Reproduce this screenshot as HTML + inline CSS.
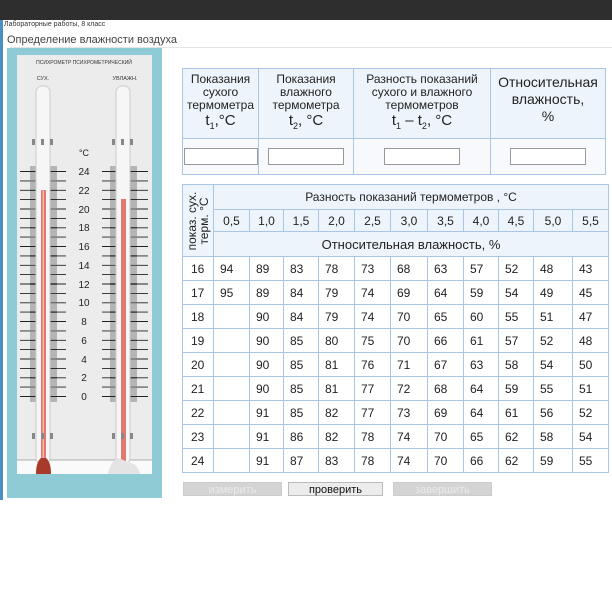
<!DOCTYPE html>
<html><head><meta charset="utf-8"><style>
*{margin:0;padding:0;box-sizing:border-box}
body{width:612px;height:614px;background:#fff;position:relative;overflow:hidden;font-family:"Liberation Sans",Arial,sans-serif;color:#222}
.abs{position:absolute}
table{border-collapse:collapse;table-layout:fixed}
td{border:1px solid #a9c6e6;text-align:center;font-size:12px;padding:0}
.t1 td{background:#eef4fb}
.t1 tr.in td{background:#f7f9fc}
.inp{display:inline-block;width:76px;height:17px;border:1px solid #999;background:#fff;vertical-align:middle}
.t2 td{font-size:12px}
.t2 .h td{background:#eef4fb}
.t2 .d td{background:#fff;text-align:left;padding-left:6px}
.t2 .d td.f{padding-left:8px;background:#fff}
.btn{position:absolute;top:482px;height:14px;font-size:11px;text-align:center;line-height:14px;border:1px solid #bbb}
</style></head><body>
<div class="abs" style="left:0;top:0;width:612px;height:20px;background:#2e2e2e"></div>
<div class="abs" style="left:0;top:20px;width:3px;height:480px;background:#4a90c0"></div>
<div class="abs" style="left:4px;top:21px;font-size:7px;color:#333">Лабораторные работы, 8 класс</div>
<div class="abs" style="left:7px;top:34px;font-size:11px;color:#444">Определение влажности воздуха</div>
<div class="abs" style="left:10px;top:47px;width:602px;height:1px;background:#e4e4e4"></div>

<svg class="abs" style="left:0;top:0" width="170" height="505">
<rect x="7" y="48" width="155" height="450" fill="#8ecbd4"/>
<rect x="17" y="55" width="135" height="419" fill="#ececec"/>
<rect x="17" y="460" width="135" height="14" fill="#fafafa"/>
<line x1="17" y1="460" x2="152" y2="460" stroke="#999" stroke-width="0.7"/>
<text x="84" y="64" font-size="5" text-anchor="middle" fill="#333" font-family="Liberation Sans">ПСИХРОМЕТР ПСИХРОМЕТРИЧЕСКИЙ</text>
<text x="43" y="80" font-size="5.5" text-anchor="middle" fill="#333" font-family="Liberation Sans">СУХ.</text>
<text x="125" y="80" font-size="5.5" text-anchor="middle" fill="#333" font-family="Liberation Sans">УВЛАЖН.</text>
<g>
<path id="lt" d="M30 167H57M30 169H57M30 171H57M30 173H57M30 175H57M30 177H57M30 179H57M30 181H57M30 183H57M30 185H57M30 187H57M30 189H57M30 191H57M30 193H57M30 195H57M30 197H57M30 199H57M30 201H57M30 203H57M30 205H57M30 207H57M30 209H57M30 211H57M30 213H57M30 215H57M30 217H57M30 219H57M30 221H57M30 223H57M30 225H57M30 227H57M30 229H57M30 231H57M30 233H57M30 235H57M30 237H57M30 239H57M30 241H57M30 243H57M30 245H57M30 247H57M30 249H57M30 251H57M30 253H57M30 255H57M30 257H57M30 259H57M30 261H57M30 263H57M30 265H57M30 267H57M30 269H57M30 271H57M30 273H57M30 275H57M30 277H57M30 279H57M30 281H57M30 283H57M30 285H57M30 287H57M30 289H57M30 291H57M30 293H57M30 295H57M30 297H57M30 299H57M30 301H57M30 303H57M30 305H57M30 307H57M30 309H57M30 311H57M30 313H57M30 315H57M30 317H57M30 319H57M30 321H57M30 323H57M30 325H57M30 327H57M30 329H57M30 331H57M30 333H57M30 335H57M30 337H57M30 339H57M30 341H57M30 343H57M30 345H57M30 347H57M30 349H57M30 351H57M30 353H57M30 355H57M30 357H57M30 359H57M30 361H57M30 363H57M30 365H57M30 367H57M30 369H57M30 371H57M30 373H57M30 375H57M30 377H57M30 379H57M30 381H57M30 383H57M30 385H57M30 387H57M30 389H57M30 391H57M30 393H57M30 395H57M30 397H57M30 399H57M30 401H57" stroke="#555" stroke-width="0.8"/>
<use href="#lt" x="80"/>
</g>
<g stroke="#222" stroke-width="0.9" id="lg">
<path d="M20 171.5H66M20 180.9H66M20 190.3H66M20 199.6H66M20 209H66M20 218.4H66M20 227.8H66M20 237.1H66M20 246.5H66M20 255.9H66M20 265.3H66M20 274.6H66M20 284H66M20 293.4H66M20 302.8H66M20 312.1H66M20 321.5H66M20 330.9H66M20 340.3H66M20 349.6H66M20 359H66M20 368.4H66M20 377.8H66M20 387.1H66M20 396.5H66"/>
</g>
<use href="#lg" x="82"/>
<rect x="36" y="86" width="14" height="378" rx="6" fill="#f6f6f6" stroke="#ccc"/>
<rect x="41" y="190" width="5" height="270" fill="#e07a70"/>
<rect x="42.5" y="190" width="1.5" height="270" fill="#f3b3aa"/>
<path d="M36 474 Q36 462 41 458 L46 458 Q51 462 51 474Z" fill="#a83a2a"/>
<rect x="116" y="86" width="14" height="378" rx="6" fill="#f6f6f6" stroke="#ccc"/>
<rect x="121" y="199" width="5" height="262" fill="#e07a70"/>
<path d="M108 474 Q110 462 118 458 L128 462 Q138 464 140 474Z" fill="#e4e4e4"/>
<g fill="#888"><rect x="32" y="139" width="3" height="6"/><rect x="41" y="139" width="3" height="6"/><rect x="50" y="139" width="3" height="6"/>
<rect x="112" y="139" width="3" height="6"/><rect x="121" y="139" width="3" height="6"/><rect x="130" y="139" width="3" height="6"/>
<rect x="32" y="433" width="3" height="6"/><rect x="41" y="433" width="3" height="6"/><rect x="50" y="433" width="3" height="6"/>
<rect x="112" y="433" width="3" height="6"/><rect x="121" y="433" width="3" height="6"/><rect x="130" y="433" width="3" height="6"/></g>
<g font-size="10" text-anchor="middle" fill="#222" font-family="Liberation Sans">
<text x="84" y="156" font-size="9">°C</text>
<text x="84" y="175">24</text><text x="84" y="194">22</text><text x="84" y="213">20</text><text x="84" y="231">18</text><text x="84" y="250">16</text><text x="84" y="269">14</text><text x="84" y="288">12</text><text x="84" y="306">10</text><text x="84" y="325">8</text><text x="84" y="344">6</text><text x="84" y="363">4</text><text x="84" y="381">2</text><text x="84" y="400">0</text>
</g>
</svg>

<table class="t1 abs" style="left:182px;top:68px;width:423px">
<col style="width:76px"><col style="width:95px"><col style="width:137px"><col style="width:115px">
<tr style="height:70px"><td style="line-height:13px">Показания<br>сухого<br>термометра<br><span style="font-size:15px;line-height:18px">t<sub style="font-size:9px">1</sub>,°C</span></td>
<td style="line-height:13px">Показания<br>влажного<br>термометра<br><span style="font-size:15px;line-height:18px">t<sub style="font-size:9px">2</sub>, °C</span></td>
<td style="line-height:13px">Разность показаний<br>сухого и влажного<br>термометров<br><span style="font-size:15px;line-height:18px">t<sub style="font-size:9px">1</sub> – t<sub style="font-size:9px">2</sub>, °C</span></td>
<td style="font-size:14px;line-height:17px;vertical-align:top;padding-top:5px">Относительная<br>влажность,<br>%</td></tr>
<tr class="in" style="height:36px"><td><span class="inp" style="width:74px"></span></td><td><span class="inp"></span></td><td><span class="inp"></span></td><td><span class="inp"></span></td></tr>
</table>

<table class="t2 abs" style="left:182px;top:184px;width:426px">
<col style="width:31px"><col style="width:36px"><col style="width:34px"><col style="width:35px"><col style="width:36px"><col style="width:36px"><col style="width:37px"><col style="width:36px"><col style="width:35px"><col style="width:35px"><col style="width:39px"><col style="width:36px">
<tr class="h" style="height:25px"><td rowspan="3" style="position:relative"><div style="position:absolute;left:50%;top:50%;transform:translate(-50%,-50%) rotate(-90deg);white-space:nowrap;font-size:12px;line-height:12px">показ. сух.<br>терм. °C</div></td><td colspan="11">Разность показаний термометров , °C</td></tr>
<tr class="h" style="height:22px"><td>0,5</td><td>1,0</td><td>1,5</td><td>2,0</td><td>2,5</td><td>3,0</td><td>3,5</td><td>4,0</td><td>4,5</td><td>5,0</td><td>5,5</td></tr>
<tr class="h" style="height:25px"><td colspan="11" style="font-size:13px">Относительная влажность, %</td></tr>
<tr class="d" style="height:24px"><td class="f">16</td><td>94</td><td>89</td><td>83</td><td>78</td><td>73</td><td>68</td><td>63</td><td>57</td><td>52</td><td>48</td><td>43</td></tr>
<tr class="d" style="height:24px"><td class="f">17</td><td>95</td><td>89</td><td>84</td><td>79</td><td>74</td><td>69</td><td>64</td><td>59</td><td>54</td><td>49</td><td>45</td></tr>
<tr class="d" style="height:24px"><td class="f">18</td><td></td><td>90</td><td>84</td><td>79</td><td>74</td><td>70</td><td>65</td><td>60</td><td>55</td><td>51</td><td>47</td></tr>
<tr class="d" style="height:24px"><td class="f">19</td><td></td><td>90</td><td>85</td><td>80</td><td>75</td><td>70</td><td>66</td><td>61</td><td>57</td><td>52</td><td>48</td></tr>
<tr class="d" style="height:24px"><td class="f">20</td><td></td><td>90</td><td>85</td><td>81</td><td>76</td><td>71</td><td>67</td><td>63</td><td>58</td><td>54</td><td>50</td></tr>
<tr class="d" style="height:24px"><td class="f">21</td><td></td><td>90</td><td>85</td><td>81</td><td>77</td><td>72</td><td>68</td><td>64</td><td>59</td><td>55</td><td>51</td></tr>
<tr class="d" style="height:24px"><td class="f">22</td><td></td><td>91</td><td>85</td><td>82</td><td>77</td><td>73</td><td>69</td><td>64</td><td>61</td><td>56</td><td>52</td></tr>
<tr class="d" style="height:24px"><td class="f">23</td><td></td><td>91</td><td>86</td><td>82</td><td>78</td><td>74</td><td>70</td><td>65</td><td>62</td><td>58</td><td>54</td></tr>
<tr class="d" style="height:24px"><td class="f">24</td><td></td><td>91</td><td>87</td><td>83</td><td>78</td><td>74</td><td>70</td><td>66</td><td>62</td><td>59</td><td>55</td></tr>
</table>

<div class="btn" style="left:183px;width:99px;background:#d4d4d4;color:#eaeaea;border-color:#ccc">измерить</div>
<div class="btn" style="left:288px;width:95px;background:#ececec;color:#111">проверить</div>
<div class="btn" style="left:393px;width:99px;background:#d4d4d4;color:#eaeaea;border-color:#ccc">завершить</div>
</body></html>
